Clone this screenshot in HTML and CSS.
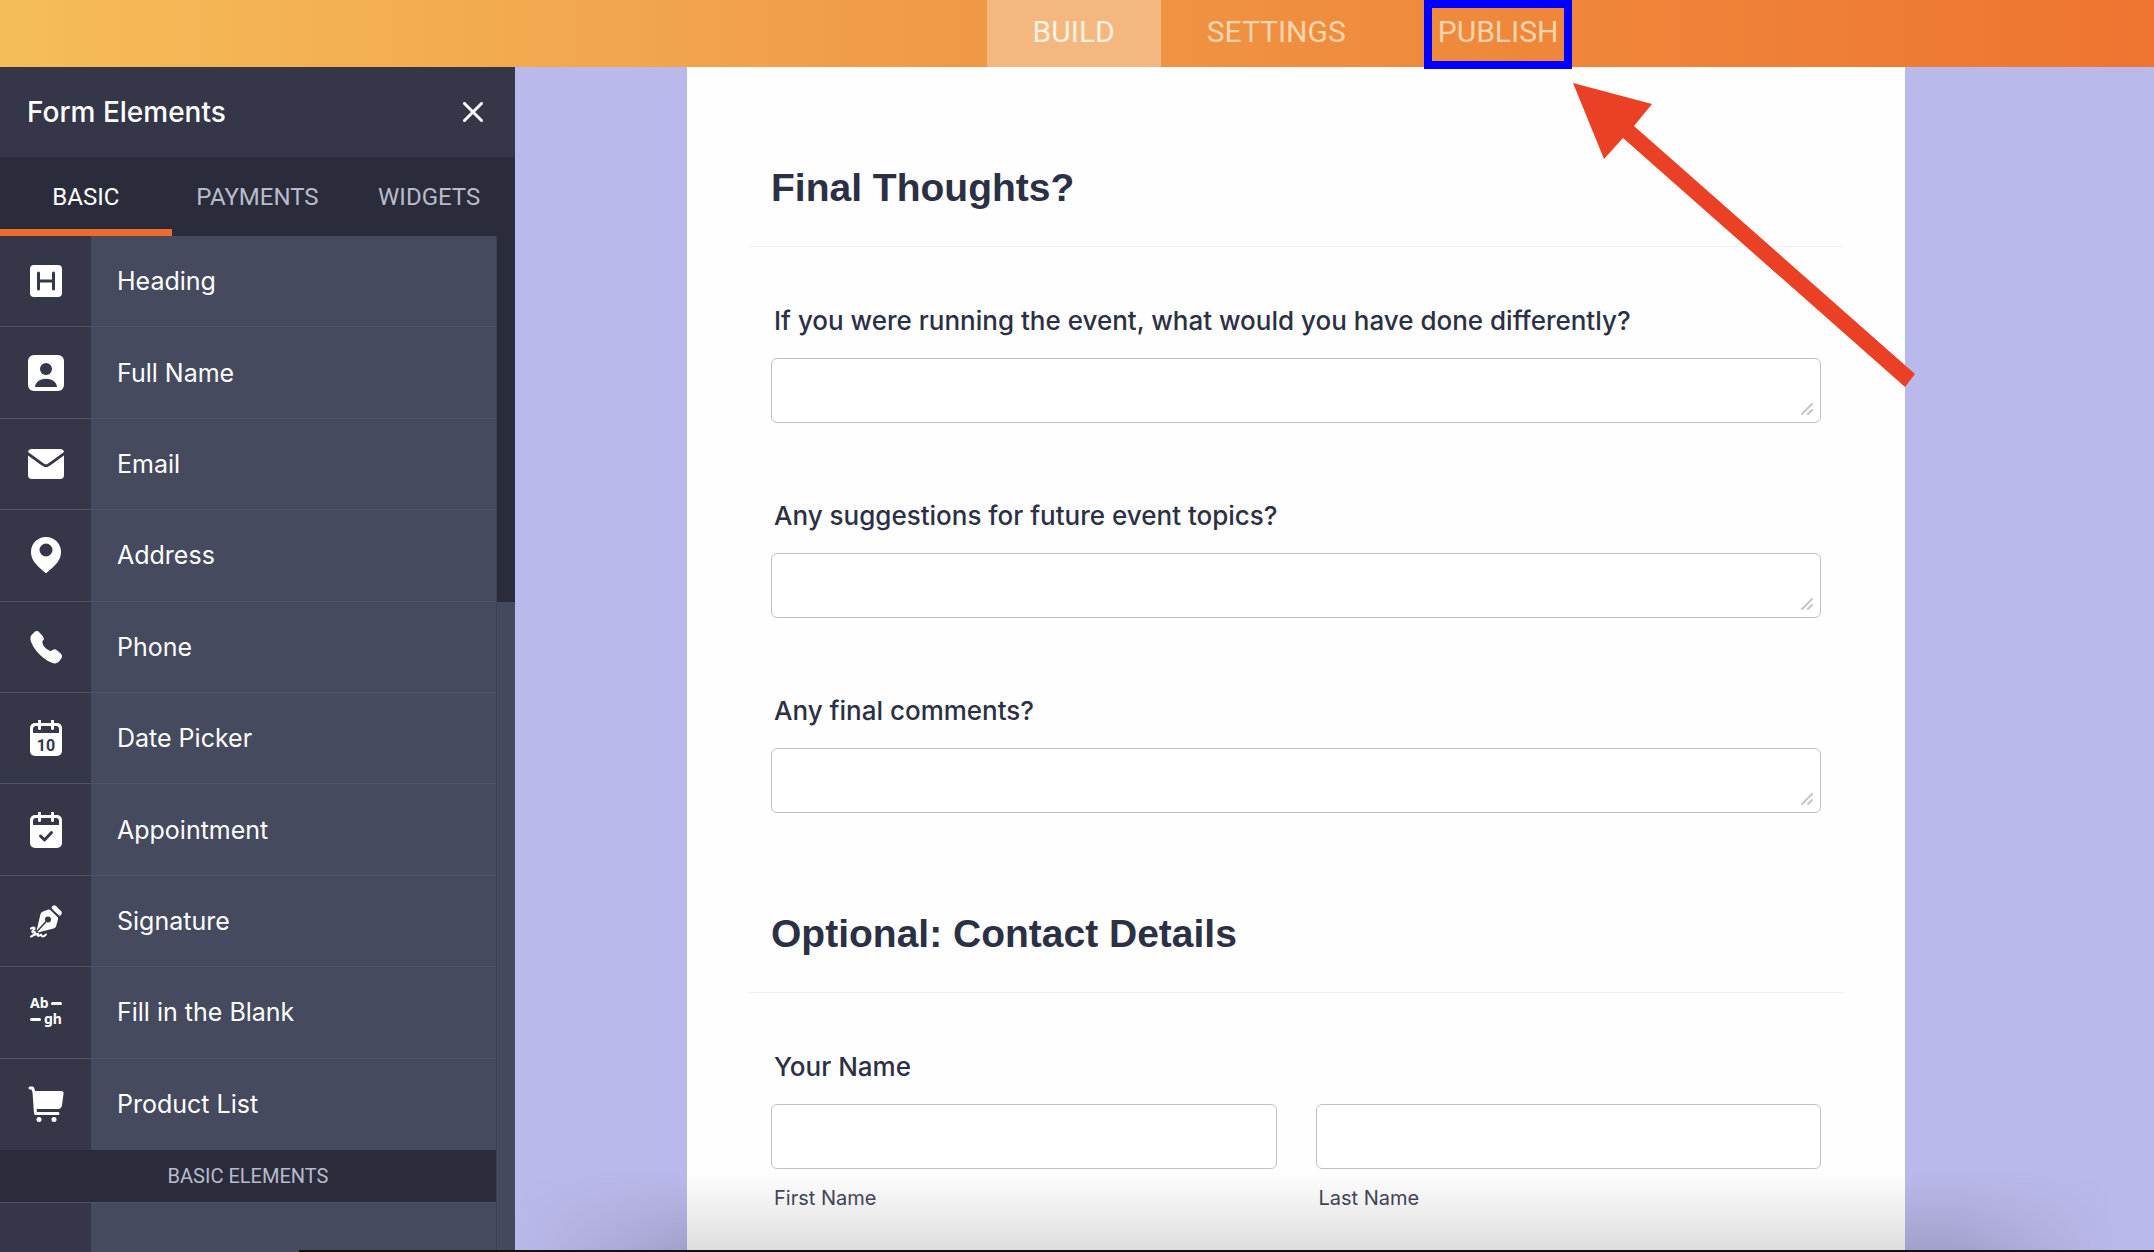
FILE: index.html
```
<!DOCTYPE html>
<html lang="en">
<head>
<meta charset="utf-8">
<title>Form Builder</title>
<link rel="stylesheet" href="styles.css">
</head>
<body>
<header class="topbar">
  <nav class="modes">
    <a class="mode mode-active" href="#build">BUILD</a>
    <a class="mode" href="#settings">SETTINGS</a>
    <a class="mode mode-marked" href="#publish">PUBLISH</a>
  </nav>
</header>
<div class="workspace">
  <aside class="panel">
    <div class="panel-head">
      <h2 class="panel-title">Form Elements</h2>
      <button class="close" type="button" aria-label="Close">
        <svg viewBox="0 0 20 20" width="20" height="20"><path d="M1.500 1.500L18.500 18.500M18.500 1.500L1.500 18.500" fill="none" stroke="currentColor" stroke-width="3" stroke-linecap="round"/></svg>
      </button>
    </div>
    <div class="tabs">
      <button class="tab tab-active" type="button">BASIC</button>
      <button class="tab" type="button">PAYMENTS</button>
      <button class="tab" type="button">WIDGETS</button>
    </div>
    <div class="panel-body">
      <div class="panel-list">
        <ul class="elements">
          <li class="element"><span class="element-icon"><svg viewBox="0 0 36 36" width="36" height="36"><rect x="2" y="2" width="32" height="32" rx="4" fill="#fff"/><path d="M10.500 10V26M25.500 10V26M10.500 18H25.500" fill="none" stroke="#35374a" stroke-width="3" stroke-linecap="round"/></svg></span><span class="element-name">Heading</span></li>
          <li class="element"><span class="element-icon"><svg viewBox="0 0 36 36" width="36" height="36"><rect width="36" height="36" rx="6" fill="#fff"/><circle cx="18" cy="14" r="6" fill="#35374a"/><path d="M7 32C8 21 28 21 29 32Z" fill="#35374a"/></svg></span><span class="element-name">Full Name</span></li>
          <li class="element"><span class="element-icon"><svg viewBox="0 0 36 36" width="36" height="36"><rect y="3" width="36" height="30" rx="4" fill="#fff"/><path d="M-1 7L15 18.500Q18 21 21 18.500L37 7" fill="none" stroke="#35374a" stroke-width="2.800"/></svg></span><span class="element-name">Email</span></li>
          <li class="element"><span class="element-icon"><svg viewBox="0 0 36 36" width="36" height="36"><path fill="#fff" fill-rule="evenodd" d="M18 0C9 0 3 7 3 15C3 23 8 28 17 35.500Q18 36.500 19 35.500C28 28 33 23 33 15C33 7 27 0 18 0ZM18 6.500A6.500 6.500 0 1 1 18 19.500A6.500 6.500 0 1 1 18 6.500Z"/></svg></span><span class="element-name">Address</span></li>
          <li class="element"><span class="element-icon"><svg viewBox="0 0 36 36" width="36" height="36"><path fill="#fff" d="M3.500 6L7 2.600Q9.500 1.200 11.500 3.500L15 7.600Q16.600 9.600 15 11.600L14.200 13Q15 19 22.500 22.300L24.500 21Q26.500 19.700 28.500 21L32.500 24.300Q35 26.500 33.400 29.500L30.500 33Q28 35.300 24 33.800C13 29.800 4.500 18.500 2.500 11Q1.800 8 3.500 6Z"/></svg></span><span class="element-name">Phone</span></li>
          <li class="element"><span class="element-icon"><svg viewBox="0 0 36 36" width="36" height="36"><rect x="2" y="3" width="32" height="33" rx="5" fill="#fff"/><path d="M5 13V9Q5 6 8 6H28Q31 6 31 9V13Z" fill="#35374a"/><path d="M11.500 1V8.500M24.500 1V8.500" stroke="#fff" stroke-width="3" stroke-linecap="round"/><text class="date-number" x="18" y="31" text-anchor="middle">10</text></svg></span><span class="element-name">Date Picker</span></li>
          <li class="element"><span class="element-icon"><svg viewBox="0 0 36 36" width="36" height="36"><rect x="2" y="3" width="32" height="33" rx="5" fill="#fff"/><path d="M5 13V9Q5 6 8 6H28Q31 6 31 9V13Z" fill="#35374a"/><path d="M11.500 1V8.500M24.500 1V8.500" stroke="#fff" stroke-width="3" stroke-linecap="round"/><path d="M12.500 24L16.500 28L23.500 20.500" fill="none" stroke="#35374a" stroke-width="3" stroke-linecap="round" stroke-linejoin="round"/></svg></span><span class="element-name">Appointment</span></li>
          <li class="element"><span class="element-icon"><svg viewBox="0 0 36 36" width="36" height="36"><path d="M24 3.500L26 2.300Q27 2 28 3L33.500 8.500Q34.300 9.500 33.500 11L32.500 12.500Q31.500 13 30.500 12L24 6Q23 4.700 24 3.500Z" fill="#fff"/><path d="M20.500 6.500Q21.500 6.300 22.500 7.200L29.500 14Q30.300 15 30 16.500L28 23.500Q27.500 25 25.500 25.500L10 29.500L8.500 28L12.500 11Q13 9 15 8.500Z" fill="#fff"/><circle cx="20" cy="16.500" r="3" fill="#35374a"/><path d="M8.500 29L19.500 17" stroke="#35374a" stroke-width="1.500"/><path d="M3 25.500Q7 23.500 6.500 26Q3 29 5 29.500Q8 28 7 31L3 33.500Q9 30.500 10 31Q8.500 34.500 13 31.500Q14 35.500 18 31.500" fill="none" stroke="#fff" stroke-width="2" stroke-linecap="round" stroke-linejoin="round"/></svg></span><span class="element-name">Signature</span></li>
          <li class="element"><span class="element-icon"><svg viewBox="0 0 36 36" width="36" height="36"><g class="blank-letters"><text x="2" y="14">Ab</text><text x="16" y="30">gh</text></g><path d="M24.500 9.500H32.500M3.500 25.500H11.500" stroke="#fff" stroke-width="3" stroke-linecap="round"/></svg></span><span class="element-name">Fill in the Blank</span></li>
          <li class="element"><span class="element-icon"><svg viewBox="0 0 36 36" width="36" height="36"><path d="M2 2H4.500L6 6L7.500 27.500H30" fill="none" stroke="#fff" stroke-width="3" stroke-linecap="round" stroke-linejoin="round"/><path d="M5.500 5H33Q36 5 35.500 8L34 19Q33.500 23 30 23H7Z" fill="#fff"/><circle cx="11" cy="33.500" r="2.500" fill="#fff"/><circle cx="26" cy="33.500" r="2.500" fill="#fff"/></svg></span><span class="element-name">Product List</span></li>
        </ul>
        <h3 class="group">BASIC ELEMENTS</h3>
        <div class="element element-next"><span class="element-icon"></span><span class="element-name"></span></div>
      </div>
      <div class="scrollbar"><div class="scroll-thumb"></div></div>
    </div>
  </aside>
  <main class="canvas">
    <form class="card">
      <h1 class="section">Final Thoughts?</h1>
      <div class="field">
        <label class="question" for="q1">If you were running the event, what would you have done differently?</label>
        <div class="area"><textarea class="box" id="q1"></textarea><svg class="grip" viewBox="0 0 12 12" width="12" height="12"><path d="M1 11L11 1M7 11L11 7"/></svg></div>
      </div>
      <div class="field">
        <label class="question" for="q2">Any suggestions for future event topics?</label>
        <div class="area"><textarea class="box" id="q2"></textarea><svg class="grip" viewBox="0 0 12 12" width="12" height="12"><path d="M1 11L11 1M7 11L11 7"/></svg></div>
      </div>
      <div class="field">
        <label class="question" for="q3">Any final comments?</label>
        <div class="area"><textarea class="box" id="q3"></textarea><svg class="grip" viewBox="0 0 12 12" width="12" height="12"><path d="M1 11L11 1M7 11L11 7"/></svg></div>
      </div>
      <h1 class="section">Optional: Contact Details</h1>
      <div class="field">
        <fieldset class="fieldset">
          <legend class="question">Your Name</legend>
          <div class="names">
            <div class="name"><input class="box" id="first" type="text"><label class="sublabel" for="first">First Name</label></div>
            <div class="name"><input class="box" id="last" type="text"><label class="sublabel" for="last">Last Name</label></div>
          </div>
        </fieldset>
      </div>
    </form>
    <div class="fade"></div>
  </main>
</div>
<div class="edge"></div>
<svg class="arrow" viewBox="0 0 342 304" width="342" height="304" aria-hidden="true"><path fill="#ea4025" d="M0 0L79 21L61 43L342 291L332 304L50 55L31 76Z"/></svg>
</body>
</html>
```
FILE: styles.css
```
* { box-sizing: border-box; }

body {
  margin: 0;
  height: 100vh;
  display: flex;
  flex-direction: column;
  overflow: hidden;
  position: relative;
  font-family: Inter, "Liberation Sans", sans-serif;
  color: #2c3045;
}

h1, h2, h3, ul { margin: 0; padding: 0; }

button { border: 0; background: none; font: inherit; color: inherit; }

.topbar {
  flex: none;
  position: relative;
  z-index: 1;
  height: 67px;
  padding: 0 78px 0 515px;
  display: flex;
  justify-content: center;
  background: linear-gradient(90deg, #f5bd5a, #f09543 50%, #ee7430);
}

.modes { display: flex; }

.mode {
  padding: 0 46px;
  font-family: Roboto, sans-serif;
  font-size: 30px;
  line-height: 64px;
  color: #fbd5ad;
  text-decoration: none;
}

.mode-active { background: #f4b77f; color: #fff3e0; }

.mode-marked { position: relative; }

.mode-marked::after {
  content: "";
  position: absolute;
  inset: 0 32px -2px;
  border: 8px solid #0000fe;
}

.workspace { flex: 1; min-height: 0; display: flex; }

.panel {
  flex: none;
  width: 515px;
  display: flex;
  flex-direction: column;
  background: #353749;
  color: #fff;
}

.panel-head {
  flex: none;
  height: 90px;
  padding: 0 24px 0 27px;
  display: flex;
  align-items: center;
  justify-content: space-between;
}

.panel-title { font-size: 28px; font-weight: 500; }

.close { padding: 8px; line-height: 0; }

.tabs {
  flex: none;
  height: 79px;
  display: grid;
  grid-template-columns: repeat(3, 1fr);
  background: #2a2c3b;
}

.tab {
  padding: 8px 0 0;
  border-bottom: 7px solid transparent;
  font-family: Roboto, sans-serif;
  font-size: 24px;
  color: #b9bbcb;
}

.tab-active { border-color: #ec6c2d; color: #fff; }

.panel-body { flex: 1; min-height: 0; display: flex; overflow: hidden; }

.panel-list { flex: 1; }

.elements {
  list-style: none;
  height: 914px;
  display: grid;
  grid-auto-rows: 1fr;
}

.element { display: flex; border-bottom: 1px solid #4f5367; }

.element:last-child { border-bottom: 0; }

.element-icon {
  width: 91px;
  display: flex;
  align-items: center;
  justify-content: center;
  background: #353749;
}

.element-name {
  flex: 1;
  display: flex;
  align-items: center;
  padding-left: 26px;
  background: #454a5e;
  font-size: 25px;
}

.element-next { height: 91px; border-top: 1px solid #4f5367; }

.date-number { font: 700 16px Roboto, sans-serif; fill: #35374a; }

.blank-letters { font: 700 14px "Noto Sans", sans-serif; fill: #fff; }

.group {
  height: 52px;
  background: #2a2c3b;
  font: 400 20px/52px Roboto, sans-serif;
  text-align: center;
  color: #b9bbcb;
}

.scrollbar { width: 19px; background: #45495d; border-left: 1px solid #3c4053; }

.scroll-thumb { height: 366px; background: #2a2c3b; }

.canvas {
  flex: 1;
  position: relative;
  padding: 0 249px 0 172px;
  background: #bab9eb;
}

.card {
  height: 100%;
  padding: 0 62px;
  background: #fefefe;
}

.section {
  height: 180px;
  padding: 97px 22px 0;
  border-bottom: 1px solid #f0f0f2;
  font: 700 39px/48px "Liberation Sans", sans-serif;
}

.field { padding: 58px 22px 0; }

.field + .field { padding-top: 77px; }

.fieldset { margin: 0; padding: 0; border: 0; }

.question {
  display: block;
  padding: 0 3px;
  margin-bottom: 21px;
  font-size: 26px;
  font-weight: 500;
  line-height: 32px;
}

.area { position: relative; }

.box {
  display: block;
  width: 100%;
  height: 65px;
  padding: 8px 12px;
  border: 1px solid #bfc0c6;
  border-radius: 6px;
  background: #fff;
  font: inherit;
  resize: none;
}

.grip {
  position: absolute;
  right: 8px;
  bottom: 8px;
  fill: none;
  stroke: #c2c3cd;
  stroke-width: 2;
  stroke-linecap: round;
}

.names { display: grid; grid-template-columns: 1fr 1fr; gap: 39px; }

.sublabel {
  display: block;
  padding: 15px 3px 0;
  font-size: 20px;
  line-height: 28px;
  color: #44475a;
}

.fade {
  position: absolute;
  inset: auto 0 0;
  height: 80px;
  background: linear-gradient(rgba(0, 0, 0, 0), rgba(0, 0, 0, 0.13));
  mask-image: linear-gradient(90deg, transparent, #000 170px, #000 calc(100% - 200px), transparent calc(100% - 40px));
}

.edge {
  position: absolute;
  left: 299px;
  right: 0;
  bottom: 0;
  height: 2px;
  background: #111;
}

.arrow { position: absolute; left: 1573px; top: 83px; }
```
